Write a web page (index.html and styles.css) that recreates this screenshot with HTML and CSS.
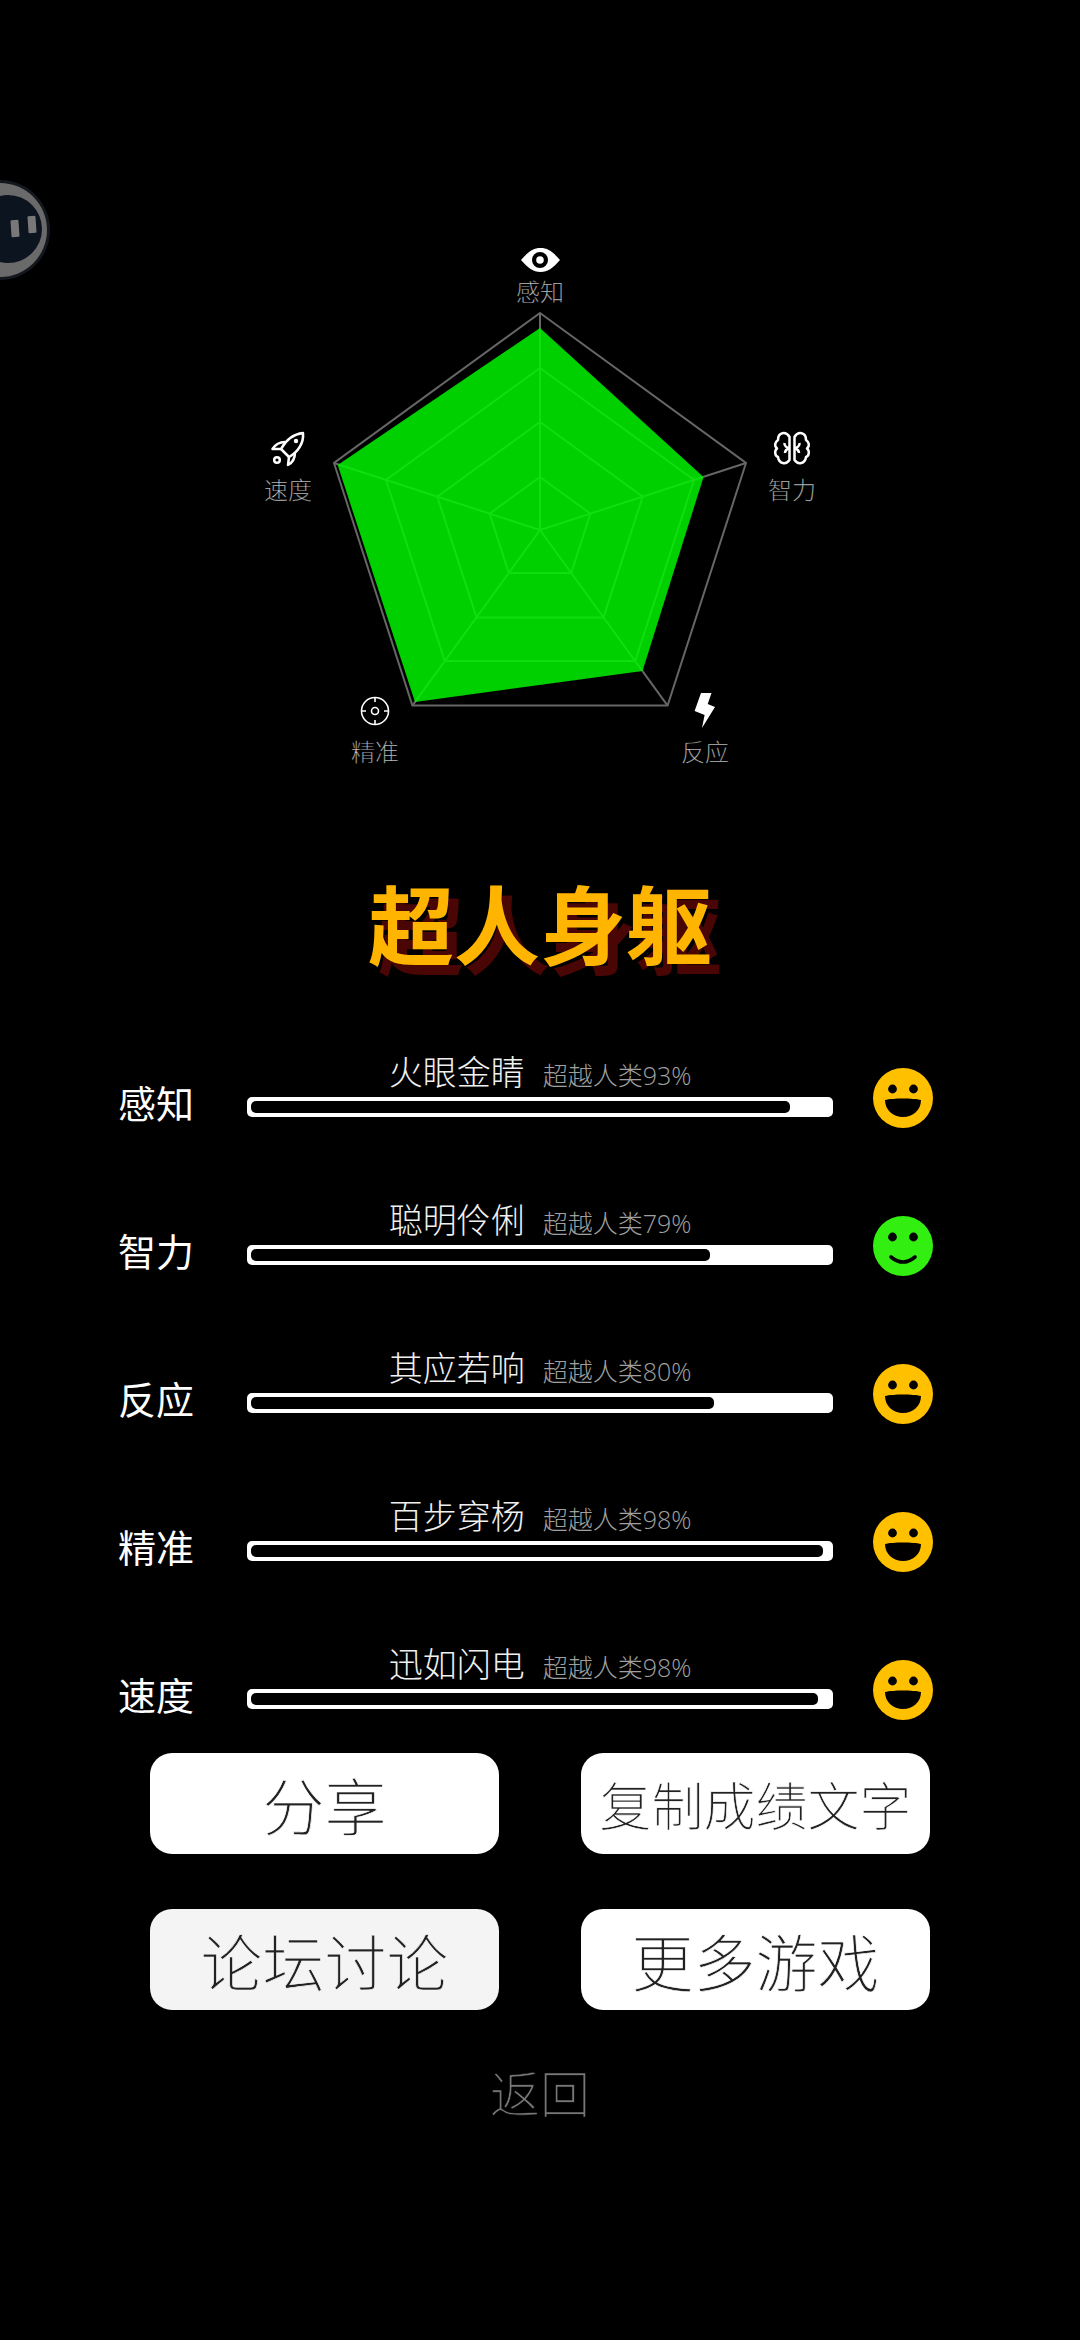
FILE: index.html
```html
<!DOCTYPE html>
<html lang="zh-CN">
<head>
  <meta charset="UTF-8">
  <meta name="viewport" content="width=device-width, initial-scale=1.0">
  <title>超人身躯</title>
  <link rel="stylesheet" href="styles.css">
</head>
<body>
  <div class="float-btn">
    <div class="float-face">
      <span class="float-eye eye-left"></span>
      <span class="float-eye eye-right"></span>
    </div>
  </div>

  <svg class="radar" viewBox="0 0 1080 860" width="1080" height="860">
    <g class="grid">
      <polygon points="540,313 746,463 667.6,705.6 412.4,705.6 334,463"/>
      <polygon points="540,368 694,480 635.2,661 444.8,661 386,480"/>
      <polygon points="540,422 642.7,496.6 603.5,617.4 476.5,617.4 437.3,496.6"/>
      <polygon points="540,477 590.4,513.6 571.2,573 508.8,573 489.6,513.6"/>
      <line x1="540" y1="530" x2="540" y2="313"/>
      <line x1="540" y1="530" x2="746" y2="463"/>
      <line x1="540" y1="530" x2="667.6" y2="705.6"/>
      <line x1="540" y1="530" x2="412.4" y2="705.6"/>
      <line x1="540" y1="530" x2="334" y2="463"/>
    </g>
    <polygon class="score" points="540,328 703.5,477 642.5,671 415,702 337.7,465"/>

    <!-- eye -->
    <path class="icon-fill" d="M521 260 C528 252 533 248 540.500 248 C548 248 553 252 560 260 C553 268 548 272 540.500 272 C533 272 528 268 521 260 Z"/>
    <circle cx="540" cy="260" r="8" fill="#000"/>
    <circle cx="540" cy="260" r="3.800" fill="#fff"/>
    <text class="radar-label" x="540" y="301">感知</text>

    <!-- brain -->
    <g class="icon-line">
      <g id="lobe">
        <path d="M789.500 437 C786 431 778 432 778 440 C775 442 774 446 777 448.500 C774 451 775 456 778 457 C779 464 786 465 789.500 460 Z"/>
        <path d="M789.500 448 C787 448 784 446 784.500 443 M789.500 448 C787 449 785 451 785 453"/>
      </g>
      <use href="#lobe" transform="translate(1584 0) scale(-1 1)"/>
    </g>
    <text class="radar-label" x="792" y="499">智力</text>

    <!-- bolt -->
    <polygon class="icon-fill" points="701,693 711.500,693 707.700,704 715,707 702,728 704.600,715 694.600,711"/>
    <text class="radar-label" x="705" y="761">反应</text>

    <!-- target -->
    <g class="icon-thin">
      <circle cx="375" cy="711" r="13.500"/>
      <circle cx="375" cy="711" r="3.500"/>
      <path d="M375 697.500 V702 M375 720 V724.500 M361.500 711 H366 M384 711 H388.500"/>
    </g>
    <text class="radar-label" x="375" y="761">精准</text>

    <!-- rocket -->
    <g class="icon-line">
      <path d="M303 433 C294 434 286 440 281 449 L289 457 C298 452 304 443 303 433 Z"/>
      <path d="M281 449 L272.500 449 C275 445 279 442 285 442"/>
      <path d="M289 457 L288 465 C292 463 295 458 295 452"/>
      <circle cx="277" cy="460" r="2.800"/>
    </g>
    <circle cx="296" cy="441" r="2.200" fill="#fff"/>
    <text class="radar-label" x="288" y="499">速度</text>
  </svg>

  <h1 class="title">超人身躯</h1>

  <svg class="defs">
    <symbol id="face-happy" viewBox="0 0 60 60">
      <circle cx="30" cy="30" r="30" fill="#ffc000"/>
      <circle cx="19.500" cy="21" r="4.400" fill="#000"/>
      <circle cx="40.500" cy="21" r="4.400" fill="#000"/>
      <path d="M12 32 C20 30 40 30 48 32 C48 42 40 49 30 49 C20 49 12 42 12 32 Z" fill="#000"/>
    </symbol>
    <symbol id="face-smile" viewBox="0 0 60 60">
      <circle cx="30" cy="30" r="30" fill="#33ee11"/>
      <circle cx="19.500" cy="21" r="4.400" fill="#000"/>
      <circle cx="40.500" cy="21" r="4.400" fill="#000"/>
      <path d="M18 41 Q30 51 42 41" fill="none" stroke="#000" stroke-width="3.600" stroke-linecap="round"/>
    </symbol>
  </svg>

  <div class="stats">
    <div class="row">
      <div class="row-name">感知</div>
      <div class="row-main">
        <div class="row-head"><span class="row-rank">火眼金睛</span><span class="row-pct">超越人类93%</span></div>
        <div class="bar"><div class="bar-fill" style="width: 93.3%"></div></div>
      </div>
      <svg class="face"><use href="#face-happy"/></svg>
    </div>
    <div class="row">
      <div class="row-name">智力</div>
      <div class="row-main">
        <div class="row-head"><span class="row-rank">聪明伶俐</span><span class="row-pct">超越人类79%</span></div>
        <div class="bar"><div class="bar-fill" style="width: 79.4%"></div></div>
      </div>
      <svg class="face"><use href="#face-smile"/></svg>
    </div>
    <div class="row">
      <div class="row-name">反应</div>
      <div class="row-main">
        <div class="row-head"><span class="row-rank">其应若响</span><span class="row-pct">超越人类80%</span></div>
        <div class="bar"><div class="bar-fill" style="width: 80.1%"></div></div>
      </div>
      <svg class="face"><use href="#face-happy"/></svg>
    </div>
    <div class="row">
      <div class="row-name">精准</div>
      <div class="row-main">
        <div class="row-head"><span class="row-rank">百步穿杨</span><span class="row-pct">超越人类98%</span></div>
        <div class="bar"><div class="bar-fill" style="width: 99%"></div></div>
      </div>
      <svg class="face"><use href="#face-happy"/></svg>
    </div>
    <div class="row">
      <div class="row-name">速度</div>
      <div class="row-main">
        <div class="row-head"><span class="row-rank">迅如闪电</span><span class="row-pct">超越人类98%</span></div>
        <div class="bar"><div class="bar-fill" style="width: 98.1%"></div></div>
      </div>
      <svg class="face"><use href="#face-happy"/></svg>
    </div>
  </div>

  <div class="actions">
    <button class="btn">分享</button>
    <button class="btn btn-small">复制成绩文字</button>
    <button class="btn btn-pressed">论坛讨论</button>
    <button class="btn">更多游戏</button>
  </div>

  <div class="back">返回</div>
</body>
</html>
```

FILE: styles.css
```css
* { box-sizing: border-box; }
html, body { margin: 0; padding: 0; height: 2340px; overflow: hidden; }
body { position: relative; width: 1080px; background: #000; font-family: "Noto Sans CJK SC", "Noto Sans", sans-serif; }

/* floating assistant button, half off the left edge */
.float-btn { position: absolute; left: -47px; top: 183px; width: 94px; height: 94px; border-radius: 50%; background: #6a6a6a; box-shadow: 0 0 0 3px #14181e; }
.float-face { position: absolute; left: 21px; top: 12px; width: 68px; height: 68px; border-radius: 50%; background: #0c1420; }
.float-eye { position: absolute; width: 8px; height: 17px; background: #787878; border-radius: 1px; transform: rotate(-4deg); }
.eye-left { left: 37px; top: 25px; }
.eye-right { left: 54px; top: 21px; }

.radar { display: block; }
.grid polygon, .grid line { fill: none; stroke: #666; stroke-width: 2; }
.score { fill: #00f500; fill-opacity: 0.85; }
.icon-fill { fill: #fff; }
.icon-line { fill: none; stroke: #fff; stroke-width: 2.500; stroke-linejoin: round; }
.icon-thin { fill: none; stroke: #fff; stroke-width: 1.600; }
.radar-label { fill: #ccc; stroke: #000; stroke-width: 0.300px; font-size: 24px; font-weight: 300; text-anchor: middle; }

.title { margin: 12px 0 0; height: 100px; font-size: 86px; line-height: 100px; font-weight: 700; text-align: center; color: #ffb400; text-shadow: 10px 10px 0 #4a0505; }

.defs { display: block; width: 0; height: 0; }

.stats { margin-top: 79px; padding-left: 118px; }
.row { display: grid; grid-template-columns: 129px 586px 100px; height: 148px; }
.row-name { margin-top: 28px; font-size: 38px; line-height: 46px; color: #fff; }
.row-main { display: flex; flex-direction: column; }
.row-head { display: flex; justify-content: center; align-items: baseline; gap: 18px; height: 46px; line-height: 40px; }
.row-rank { font-size: 34px; color: #f0f0f0; font-weight: 300; }
.row-pct { font-size: 25px; color: #a0a0a0; font-weight: 300; font-family: "Open Sans", "Noto Sans CJK SC", sans-serif; }
.bar { height: 20px; padding: 4px; background: #fff; border-radius: 5px; }
.bar-fill { height: 12px; background: #000; border-radius: 5px; }
.face { width: 60px; height: 60px; margin: 17px 0 0 40px; }

.actions { display: grid; grid-template-columns: 349px 349px; column-gap: 82px; row-gap: 55px; margin: -38px 0 0 150px; }
.btn { height: 101px; padding: 0; border: 0; border-radius: 22px; background: #fff; color: #222; font-family: inherit; font-size: 62px; font-weight: 300; -webkit-text-stroke: 0.700px #fff; }
.btn-small { font-size: 52px; }
.btn-pressed { background: #f4f4f4; -webkit-text-stroke-color: #f4f4f4; }

.back { margin-top: 51px; font-size: 50px; line-height: 60px; font-weight: 300; text-align: center; color: #777; -webkit-text-stroke: 0.600px #000; }
```
